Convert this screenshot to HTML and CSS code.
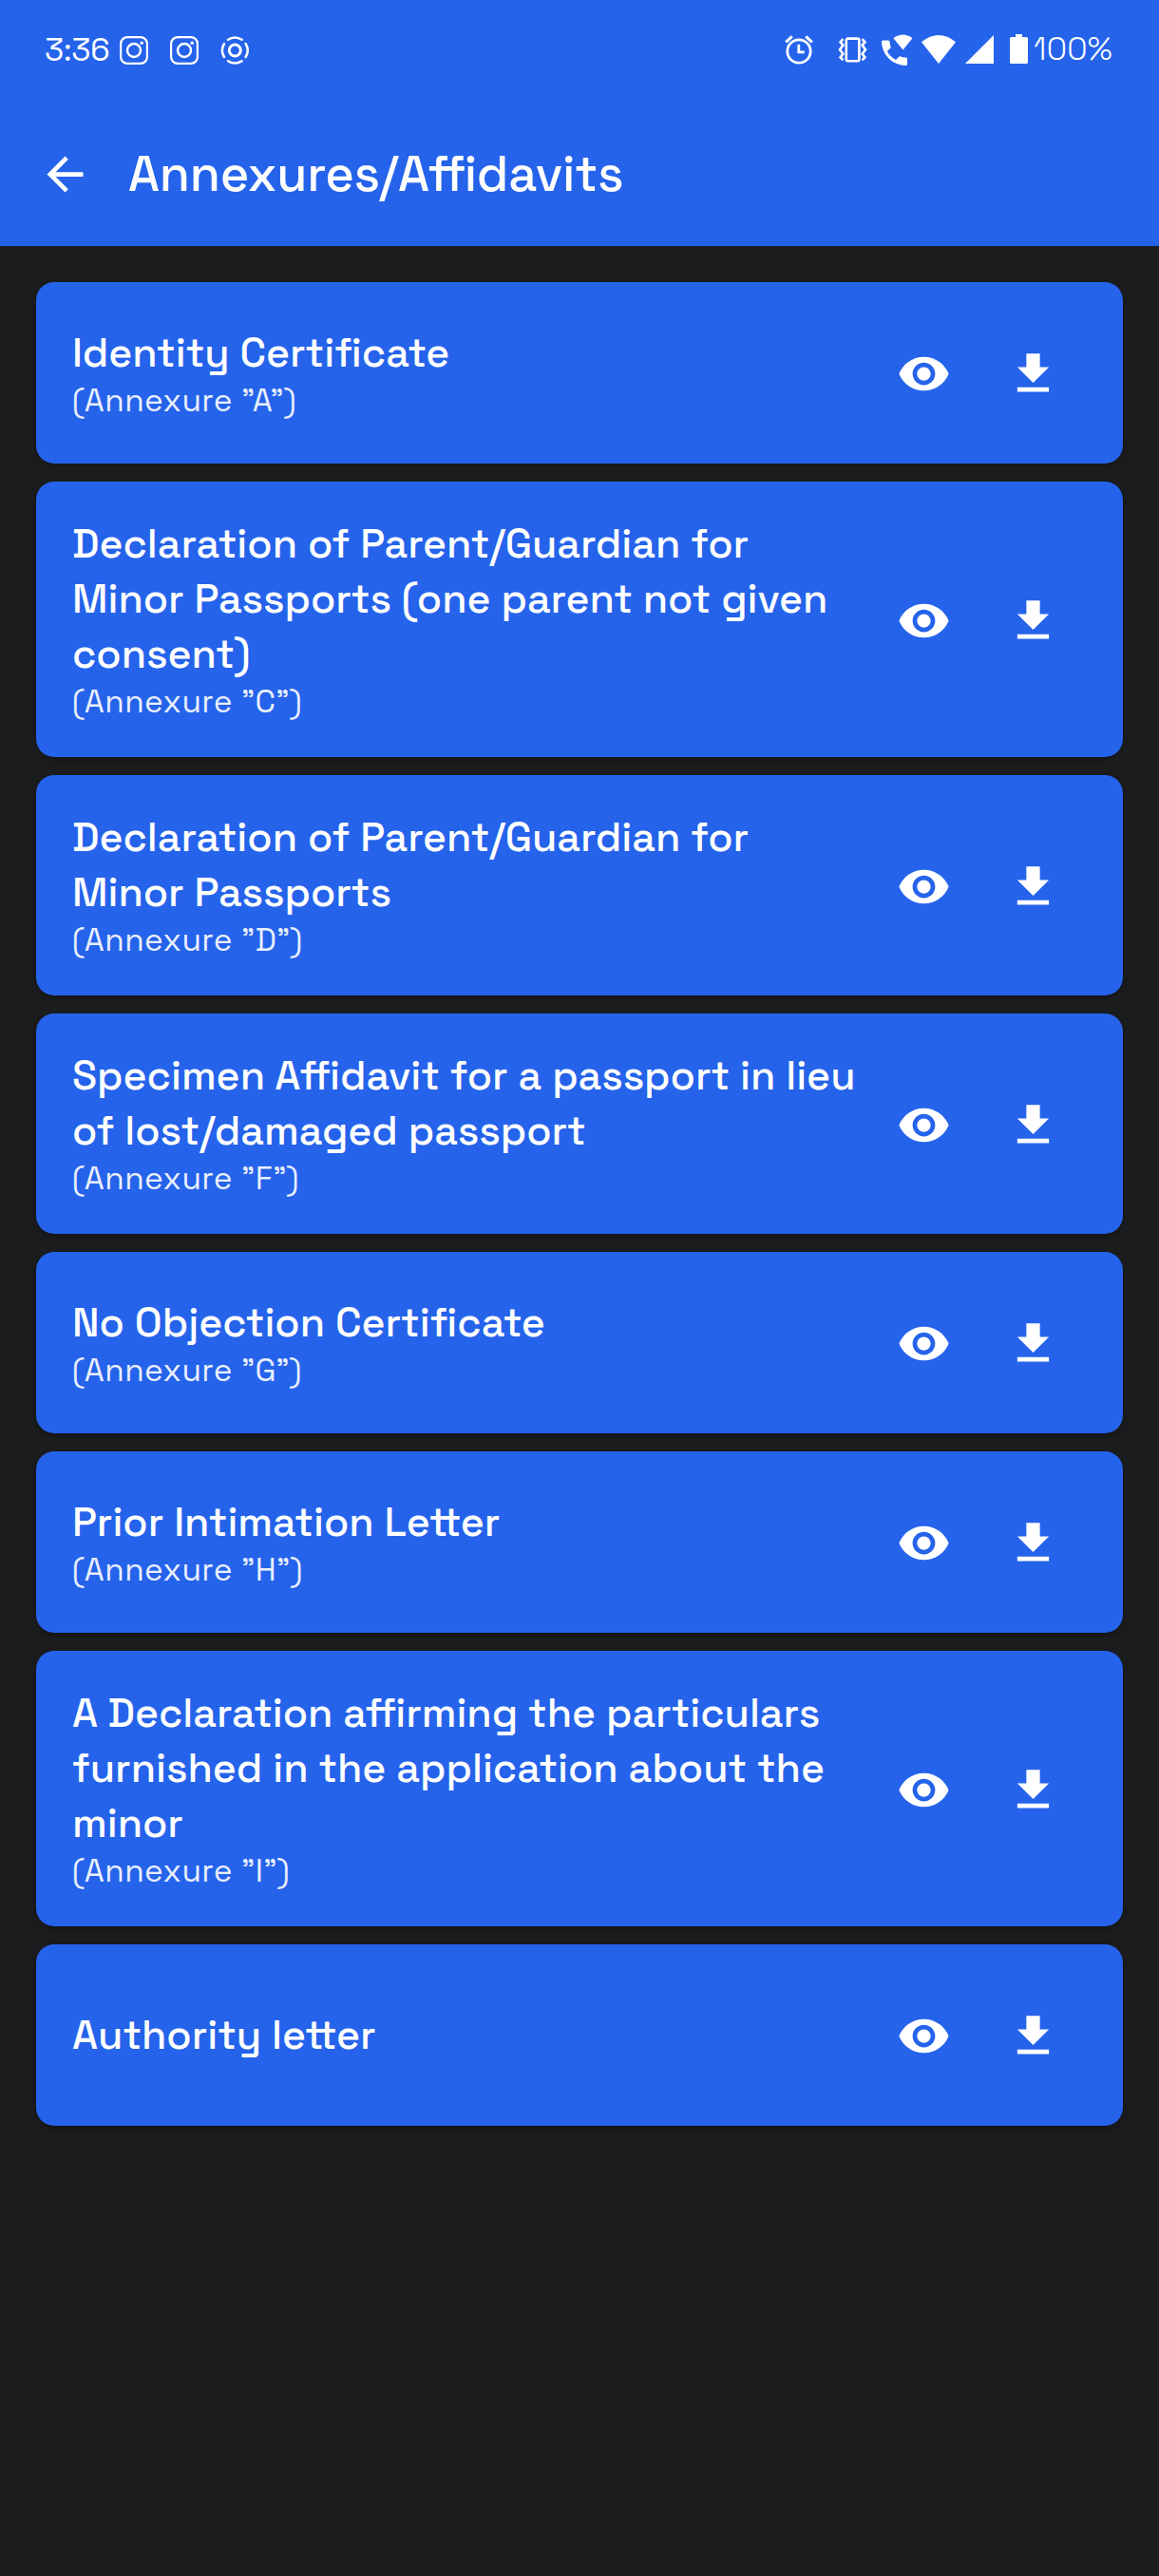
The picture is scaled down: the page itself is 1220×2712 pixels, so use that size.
FILE: index.html
```
<!DOCTYPE html>
<html lang="en">
<head>
<meta charset="utf-8">
<title>Annexures/Affidavits</title>
<link rel="stylesheet" href="styles.css">
</head>
<body>
<svg class="sprite" aria-hidden="true">
  <symbol id="eye" viewBox="0 0 24 24"><path d="M12 4.5C7 4.5 2.73 7.61 1 12c1.73 4.39 6 7.5 11 7.5s9.27-3.11 11-7.5c-1.73-4.39-6-7.5-11-7.5zM12 17c-2.76 0-5-2.24-5-5s2.24-5 5-5 5 2.24 5 5-2.24 5-5 5zm0-8c-1.66 0-3 1.34-3 3s1.34 3 3 3 3-1.34 3-3-1.34-3-3-3z"/></symbol>
  <symbol id="download" viewBox="0 0 24 24"><path d="M19 9h-4V3H9v6H5l7 7 7-7zM5 18v2h14v-2H5z"/></symbol>
  <symbol id="instagram" viewBox="0 0 30 30"><rect x="1.1" y="1.1" width="27.8" height="27.8" rx="7" fill="none" stroke="#fff" stroke-width="2.2"/><circle cx="15" cy="15" r="7" fill="none" stroke="#fff" stroke-width="2.4"/><circle cx="23.2" cy="7.3" r="1.8"/></symbol>
</svg>

<header class="header">
  <div class="status">
    <span class="clock">3:36</span>
    <div class="notifications">
      <svg width="30" height="30"><use href="#instagram"/></svg>
      <svg width="30" height="30"><use href="#instagram"/></svg>
      <svg width="30" height="30" viewBox="0 0 30 30"><g fill="none" stroke="#fff"><circle cx="15.3" cy="15" r="6" stroke-width="3"/><path stroke-width="2.5" stroke-linecap="round" d="M8 3.8A13.4 13.4 0 0 1 22.6 3.8M26.6 8A13.4 13.4 0 0 1 26.6 22M22.6 26.2A13.4 13.4 0 0 1 8 26.2M4 22A13.4 13.4 0 0 1 4 8"/></g></svg>
    </div>
    <div class="system">
      <svg class="alarm" width="30" height="34" viewBox="0 0 30 34"><g fill="none" stroke="#fff"><circle cx="15" cy="18" r="12.2" stroke-width="2.8"/><path stroke-width="2.8" d="M14.8 10.8v8.1h6"/><path stroke-width="3" d="M1.2 8.4l6.6-6M28.8 8.4l-6.6-6"/></g></svg>
      <svg class="vibrate" width="31" height="34" viewBox="0 0 31 34"><g fill="none" stroke="#fff" stroke-width="2.6"><rect x="8.8" y="4.6" width="13.6" height="23.6" rx="1.6"/><path d="M5.4 5.2l-2.8 3 2.8 3.4-3.4 4.6 3.4 4.6-2.8 3.4 2.8 3.2M25.6 5.2l2.8 3-2.8 3.4 3.4 4.6-3.4 4.6 2.8 3.4-2.8 3.2"/></g></svg>
      <svg class="call" width="33" height="34" viewBox="0 0 33 34"><path d="M0 8Q0 6.5 1.500 6.500H7Q8.500 6.500 8.600 8Q8.800 11 9.600 13.200Q9.800 14.200 9 15L5.900 18Q9 24 15 27L18 23.900Q18.800 23.100 19.800 23.400Q22.500 24.300 25.500 24.400Q27 24.500 27 26V31.500Q27 33 25.500 33A25.500 25.500 0 0 1 0 8z"/><path d="M12.400 4.300Q22.400-3.200 32.500 4.300L22.500 16.500z"/></svg>
      <svg class="wifi" width="36" height="34" viewBox="0 0 36 34"><path d="M0 8.200Q18-6.200 36 8.200L18 31z"/></svg>
      <svg class="signal" width="30" height="34" viewBox="0 0 30 34"><path d="M30 1v30H0z"/></svg>
      <svg class="battery" width="19" height="34" viewBox="0 0 19 34"><path d="M6 0h7v3h4.500q1.500 0 1.500 1.500v25q0 1.500-1.500 1.500h-16Q0 31 0 29.500v-25Q0 3 1.500 3H6z"/></svg>
      <span class="percent">100%</span>
    </div>
  </div>
  <div class="appbar">
    <svg class="back" width="57" height="57" viewBox="0 0 24 24"><path d="M20 11H7.830l5.590-5.590L12 4l-8 8 8 8 1.410-1.410L7.830 13H20v-2z"/></svg>
    <h1 class="page-title">Annexures/Affidavits</h1>
  </div>
</header>

<main class="list">
  <article class="card">
    <div class="text"><h2 class="name">Identity Certificate</h2><p class="annexure">(Annexure ”A”)</p></div>
    <div class="actions"><svg class="icon"><use href="#eye"/></svg><svg class="icon"><use href="#download"/></svg></div>
  </article>
  <article class="card">
    <div class="text"><h2 class="name">Declaration of Parent/Guardian for Minor Passports (one parent not given consent)</h2><p class="annexure">(Annexure ”C”)</p></div>
    <div class="actions"><svg class="icon"><use href="#eye"/></svg><svg class="icon"><use href="#download"/></svg></div>
  </article>
  <article class="card">
    <div class="text"><h2 class="name">Declaration of Parent/Guardian for Minor Passports</h2><p class="annexure">(Annexure ”D”)</p></div>
    <div class="actions"><svg class="icon"><use href="#eye"/></svg><svg class="icon"><use href="#download"/></svg></div>
  </article>
  <article class="card">
    <div class="text"><h2 class="name">Specimen Affidavit for a passport in lieu of lost/damaged passport</h2><p class="annexure">(Annexure ”F”)</p></div>
    <div class="actions"><svg class="icon"><use href="#eye"/></svg><svg class="icon"><use href="#download"/></svg></div>
  </article>
  <article class="card">
    <div class="text"><h2 class="name">No Objection Certificate</h2><p class="annexure">(Annexure ”G”)</p></div>
    <div class="actions"><svg class="icon"><use href="#eye"/></svg><svg class="icon"><use href="#download"/></svg></div>
  </article>
  <article class="card">
    <div class="text"><h2 class="name">Prior Intimation Letter</h2><p class="annexure">(Annexure ”H”)</p></div>
    <div class="actions"><svg class="icon"><use href="#eye"/></svg><svg class="icon"><use href="#download"/></svg></div>
  </article>
  <article class="card">
    <div class="text"><h2 class="name">A Declaration affirming the particulars furnished in the application about the minor</h2><p class="annexure">(Annexure ”I”)</p></div>
    <div class="actions"><svg class="icon"><use href="#eye"/></svg><svg class="icon"><use href="#download"/></svg></div>
  </article>
  <article class="card">
    <div class="text"><h2 class="name name-only">Authority letter</h2></div>
    <div class="actions"><svg class="icon"><use href="#eye"/></svg><svg class="icon"><use href="#download"/></svg></div>
  </article>
</main>
</body>
</html>
```
FILE: styles.css
```
* { box-sizing: border-box; margin: 0; }

body {
  min-height: 2712px;
  background: #1b1c1e;
  color: #fff;
  font-family: "Space Grotesk", Inter, sans-serif;
}

svg { display: block; flex: none; fill: #fff; }
.sprite { display: none; }

.header { height: 259px; background: #2563eb; }

.status { display: flex; height: 107px; padding: 0 40px 0 47px; }
.clock { width: 79px; padding-top: 33px; font-size: 33.4px; line-height: 40px; font-weight: 400; letter-spacing: -0.2px; }
.notifications { display: flex; gap: 23px; padding-top: 38px; }
.system { display: flex; margin-left: auto; padding-top: 36px; }
.vibrate { margin-left: 26px; }
.call { margin-left: 15px; }
.wifi { margin-left: 9px; }
.signal { margin-left: 10px; }
.battery { margin-left: 17px; }
.percent { width: 92px; margin: -4px 0 0 6px; font-size: 33.4px; line-height: 40px; font-weight: 350; letter-spacing: 0.2px; }

.appbar { display: flex; align-items: center; height: 153px; padding: 0 40px; }
.page-title { margin: -1px 0 0 38px; font-size: 52.4px; line-height: 66px; font-weight: 500; letter-spacing: -0.25px; }

.list { display: flex; flex-direction: column; gap: 19px; padding: 38px; }
.card {
  display: flex;
  align-items: center;
  min-height: 191px;
  padding: 38px 37px 38px 38px;
  border-radius: 19px;
  background: #2563eb;
  box-shadow: 0 2px 5px rgba(0, 0, 0, 0.3);
}
.text { flex: 1; }
.name { margin-top: -1px; font-size: 42.9px; line-height: 58px; font-weight: 500; letter-spacing: -0.03px; }
.name-only { margin-top: 0; }
.annexure { margin-top: 1px; font-size: 33.4px; line-height: 40px; letter-spacing: 0.45px; opacity: 0.9; }

.actions { display: flex; margin: -38px 0; padding-top: 2px; }
.icon { width: 115px; height: 57px; }
```
